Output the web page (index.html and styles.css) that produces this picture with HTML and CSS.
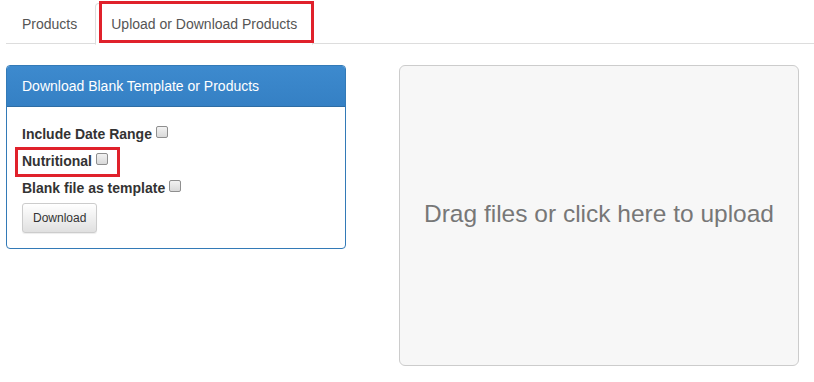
FILE: index.html
```html
<!DOCTYPE html>
<html lang="en">
<head>
    <meta charset="UTF-8">
    <title>Products</title>
    <link rel="stylesheet" href="styles.css">
</head>
<body>
<div class="page">
    <ul class="tabs">
        <li><a href="javascript:">Products</a></li>
        <li class="active marked"><a href="javascript:">Upload or Download Products</a></li>
    </ul>

    <div class="content">
        <div class="panel">
            <div class="panel-heading">Download Blank Template or Products</div>
            <div class="panel-body">
                <div class="field"><label>Include Date Range</label><input type="checkbox"></div>
                <div class="field marked-field"><label>Nutritional</label><input type="checkbox"></div>
                <div class="field"><label>Blank file as template</label><input type="checkbox"></div>
                <button class="btn">Download</button>
            </div>
        </div>

        <div class="dropzone">Drag files or click here to upload</div>
    </div>
</div>
</body>
</html>
```

FILE: styles.css
```css
*{
    padding: 0;
    margin: 0;
    box-sizing: border-box;
    list-style: none;
    text-decoration: none;
}
body{
    font-family: "Liberation Sans", Arial, sans-serif;
    font-size: 14px;
    color: #333;
    background: #fff;
}
.page{
    padding: 3px 0 0 6px;
}
.tabs{
    display: flex;
    border-bottom: 1px solid #ddd;
    height: 41px;
}
.tabs li{
    margin-right: 2px;
    margin-bottom: -1px;
}
.tabs a{
    display: block;
    padding: 10px 15px;
    line-height: 20px;
    color: #555;
    border: 1px solid transparent;
    border-radius: 4px 4px 0 0;
}
.tabs .active a{
    background: #fff;
    border-color: #ddd #ddd transparent;
}
.tabs .marked{
    position: relative;
}
.tabs .marked::after{
    content: "";
    position: absolute;
    left: 4px;
    right: -1px;
    top: -2px;
    height: 36px;
    border: 3px solid #e0212b;
}
.content{
    display: flex;
    gap: 53px;
    padding-top: 21px;
}
.panel{
    width: 340px;
    height: 184px;
    border: 1px solid #337ab7;
    border-radius: 4px;
    overflow: hidden;
}
.panel-heading{
    height: 41px;
    padding: 0 15px;
    line-height: 40px;
    color: #fff;
    background: linear-gradient(to bottom, #3d8ace 0, #3580c4 100%);
    border-bottom: 1px solid #2e6da4;
}
.panel-body{
    padding: 13px 15px 0;
}
.field{
    display: flex;
    align-items: center;
    height: 27px;
}
.field label{
    font-weight: bold;
    margin-right: 4px;
}
.field input{
    -webkit-appearance: none;
    appearance: none;
    width: 12px;
    height: 12px;
    margin: 0 0 3px;
    border: 1px solid #8f8f8f;
    border-radius: 2px;
    background: linear-gradient(to bottom, #f2f2f2 0, #d9d9d9 100%);
}
.marked-field{
    position: relative;
    width: 94px;
}
.marked-field::after{
    content: "";
    position: absolute;
    left: -7px;
    right: -4px;
    top: 0;
    bottom: -3px;
    border: 3px solid #e0212b;
}
.btn{
    margin-top: 2px;
    height: 30px;
    padding: 0 10px;
    font-family: inherit;
    font-size: 12px;
    color: #333;
    border: 1px solid #ccc;
    border-radius: 3px;
    background: linear-gradient(to bottom, #fff 0, #e0e0e0 100%);
    box-shadow: inset 0 1px 0 rgba(255,255,255,.15), 0 1px 1px rgba(0,0,0,.075);
}
.dropzone{
    width: 400px;
    height: 301px;
    display: flex;
    align-items: center;
    justify-content: center;
    padding-bottom: 4px;
    font-size: 24.5px;
    color: #777;
    background: #f7f7f7;
    border: 1px solid #ccc;
    border-radius: 6px;
}
```
